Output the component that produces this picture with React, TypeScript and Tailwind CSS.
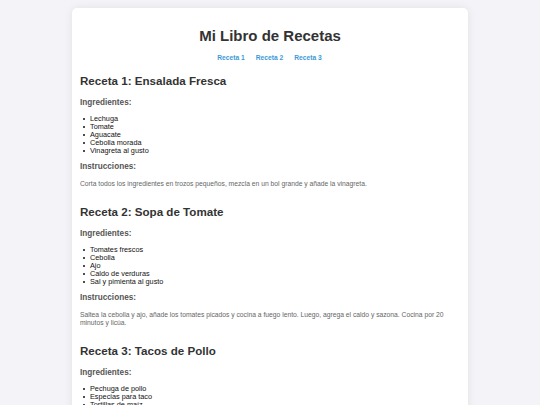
const RECIPES = [
  {
    title: "Receta 1: Ensalada Fresca",
    ingredients: ["Lechuga", "Tomate", "Aguacate", "Cebolla morada", "Vinagreta al gusto"],
    steps: "Corta todos los ingredientes en trozos pequeños, mezcla en un bol grande y añade la vinagreta.",
  },
  {
    title: "Receta 2: Sopa de Tomate",
    ingredients: ["Tomates frescos", "Cebolla", "Ajo", "Caldo de verduras", "Sal y pimienta al gusto"],
    steps:
      "Saltea la cebolla y ajo, añade los tomates picados y cocina a fuego lento. Luego, agrega el caldo y sazona. Cocina por 20 minutos y licúa.",
  },
  {
    title: "Receta 3: Tacos de Pollo",
    ingredients: ["Pechuga de pollo", "Especias para taco", "Tortillas de maíz", "Cebolla y cilantro", "Salsa al gusto"],
    steps: "Cocina el pollo con las especias, desmenúzalo y sírvelo en tortillas con cebolla, cilantro y salsa.",
  },
];

export default function App() {
  return (
    <div className="min-h-screen bg-[#f4f4f8] pt-2 font-['Liberation_Sans',Arial,sans-serif]">
      <div className="mx-auto w-[396px] rounded-[5px] bg-white pl-2 pr-[6px] pt-[19px] pb-6 shadow-[0_0_8px_rgba(0,0,0,0.08)]">
        {/* Header */}
        <h1 className="pr-[2px] text-center text-[15px] font-bold leading-[17px] text-[#333]">Mi Libro de Recetas</h1>
        <nav className="mt-[10px] flex justify-center gap-[11px] pr-[3px] text-[6.7px] font-bold leading-[8px] text-[#3a9ad9]">
          <a href="#receta1">Receta 1</a>
          <a href="#receta2">Receta 2</a>
          <a href="#receta3">Receta 3</a>
        </nav>

        {/* Recipes */}
        <div className="mt-3 flex flex-col gap-[17px]">
          {RECIPES.map((recipe, i) => (
            <section key={recipe.title} id={`receta${i + 1}`}>
              <h2 className="text-[11.6px] font-bold leading-[14px] text-[#333]">{recipe.title}</h2>
              <h3 className="mt-[10px] text-[8.2px] font-bold leading-[10px] text-[#555]">Ingredientes:</h3>
              <ul className="mt-[7px] text-[7.3px] leading-[8px] text-[#111]">
                {recipe.ingredients.map((item) => (
                  <li key={item} className="flex items-center">
                    <span className="ml-[3px] mr-[5px] h-[2px] w-[2px] shrink-0 rounded-full bg-[#111]" />
                    {item}
                  </li>
                ))}
              </ul>
              <h3 className="mt-[7px] text-[8.2px] font-bold leading-[10px] text-[#555]">Instrucciones:</h3>
              <p className="mt-2 text-[6.74px] leading-[8px] text-[#666]">{recipe.steps}</p>
            </section>
          ))}
        </div>
      </div>
    </div>
  );
}
